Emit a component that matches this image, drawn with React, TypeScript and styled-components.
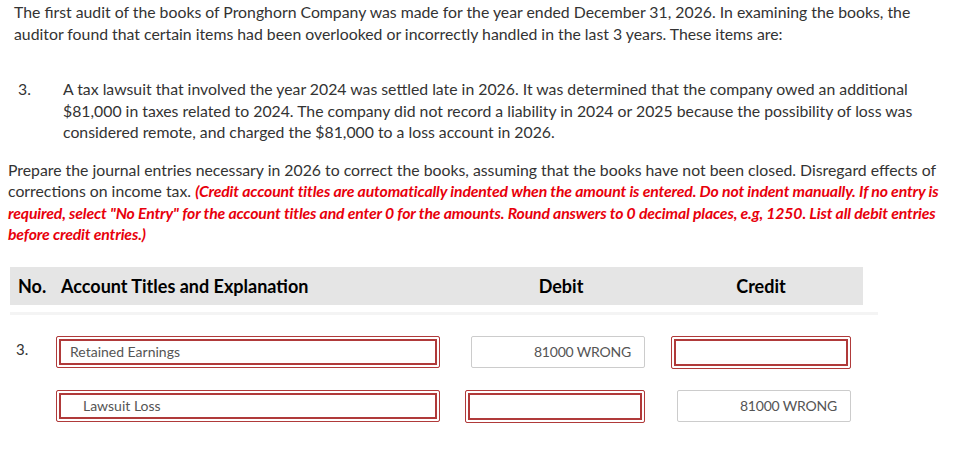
import React from 'react';
import styled, { createGlobalStyle } from 'styled-components';

const GlobalStyle = createGlobalStyle`
  html, body {
    margin: 0;
    padding: 0;
    background: #fff;
  }
  body {
    font-family: Lato, "Open Sans", Arial, sans-serif;
    color: #333;
    font-size: 15.8px;
  }
`;

interface Entry {
  account: string;
  debit: string;
  credit: string;
  indent?: boolean;
}

const entries: Entry[] = [
  { account: 'Retained Earnings', debit: '81000 WRONG', credit: '' },
  { account: 'Lawsuit Loss', debit: '', credit: '81000 WRONG', indent: true },
];

export default function App() {
  return (
    <>
      <GlobalStyle />
      <Page>
        <Intro>
          The first audit of the books of Pronghorn Company was made for the year ended December
          31, 2026. In examining the books, the auditor found that certain items had been
          overlooked or incorrectly handled in the last 3 years. These items are:
        </Intro>

        <Item>
          <ItemNo>3.</ItemNo>
          <ItemText>
            A tax lawsuit that involved the year 2024 was settled late in 2026. It was determined
            that the company owed an additional $81,000 in taxes related to 2024. The company did
            not record a liability in 2024 or 2025 because the possibility of loss was considered
            remote, and charged the $81,000 to a loss account in 2026.
          </ItemText>
        </Item>

        <Instructions>
          Prepare the journal entries necessary in 2026 to correct the books, assuming that the
          books have not been closed. Disregard effects of corrections on income tax.{' '}
          <Warning>
            (Credit account titles are automatically indented when the amount is entered. Do not
            indent manually. If no entry is required, select "No Entry" for the account titles and
            enter 0 for the amounts. Round answers to 0 decimal places, e.g, 1250. List all debit
            entries before credit entries.)
          </Warning>
        </Instructions>

        <Journal>
          <HeaderRow>
            <HeadCell>No.</HeadCell>
            <HeadCell>Account Titles and Explanation</HeadCell>
            <HeadCell center>Debit</HeadCell>
            <HeadCell center>Credit</HeadCell>
          </HeaderRow>
          <Divider />
          {entries.map((entry, i) => (
            <EntryRow key={i}>
              <RowNo>{i === 0 ? '3.' : ''}</RowNo>
              <AccountField indent={entry.indent}>{entry.account}</AccountField>
              <AmountCell pad={18}>
                <AmountField invalid={!entry.debit}>{entry.debit}</AmountField>
              </AmountCell>
              <AmountCell pad={12}>
                <AmountField invalid={!entry.credit}>{entry.credit}</AmountField>
              </AmountCell>
            </EntryRow>
          ))}
        </Journal>
      </Page>
    </>
  );
}

const Page = styled.div`
  padding: 1px 8px 0 8px;
  width: 937px;
`;

const Intro = styled.p`
  margin: 0;
  padding-left: 6px;
  line-height: 21.5px;
`;

const Item = styled.div`
  display: flex;
  margin-top: 34px;
  padding-left: 10px;
  line-height: 21.5px;
`;

const ItemNo = styled.div`
  width: 45px;
  flex-shrink: 0;
`;

const ItemText = styled.div`
  flex: 1;
`;

const Instructions = styled.p`
  margin: 16px 0 0 0;
  line-height: 21.5px;
`;

const Warning = styled.span`
  color: #e8000b;
  font-weight: 700;
  font-style: italic;
  letter-spacing: -0.15px;
`;

const Journal = styled.div`
  margin-top: 22px;
  padding-left: 2px;
`;

const HeaderRow = styled.div`
  display: grid;
  grid-template-columns: 51px 400px 200px 200px;
  align-items: center;
  width: 853px;
  height: 38px;
  background: #e5e5e5;
`;

const HeadCell = styled.div<{ center?: boolean }>`
  font-size: 18px;
  font-weight: 700;
  color: #000;
  text-align: ${({ center }) => (center ? 'center' : 'left')};
  &:first-child {
    padding-left: 8px;
  }
`;

const Divider = styled.div`
  width: 868px;
  height: 3px;
  margin-top: 7px;
  background: #f4f4f4;
`;

const EntryRow = styled.div`
  display: grid;
  grid-template-columns: 46px 407px 200px 200px;
  align-items: start;
  margin-top: 21px;
`;

const RowNo = styled.div`
  padding: 4px 0 0 6px;
  font-size: 15px;
`;

const fieldBase = `
  box-sizing: border-box;
  height: 32px;
  display: flex;
  align-items: center;
  font-size: 14px;
  color: #555;
  background: #fff;
  border-radius: 2px;
`;

const AccountField = styled.div<{ indent?: boolean }>`
  ${fieldBase}
  width: 384px;
  padding-left: ${({ indent }) => (indent ? '26px' : '13px')};
  border: 1px solid #b03a3a;
  box-shadow: inset 0 0 0 2px #fff, inset 0 0 0 4px #b03a3a;
`;

const AmountCell = styled.div<{ pad: number }>`
  display: flex;
  justify-content: flex-end;
  padding-right: ${({ pad }) => pad}px;
`;

const AmountField = styled.div<{ invalid?: boolean }>`
  ${fieldBase}
  justify-content: flex-end;
  padding-right: 13px;
  letter-spacing: -0.2px;
  width: ${({ invalid }) => (invalid ? '180px' : '174px')};
  height: ${({ invalid }) => (invalid ? '33px' : '32px')};
  border: 1px solid ${({ invalid }) => (invalid ? '#b03a3a' : '#cccccc')};
  box-shadow: ${({ invalid }) =>
    invalid ? 'inset 0 0 0 2px #fff, inset 0 0 0 4px #b03a3a' : 'none'};
`;
